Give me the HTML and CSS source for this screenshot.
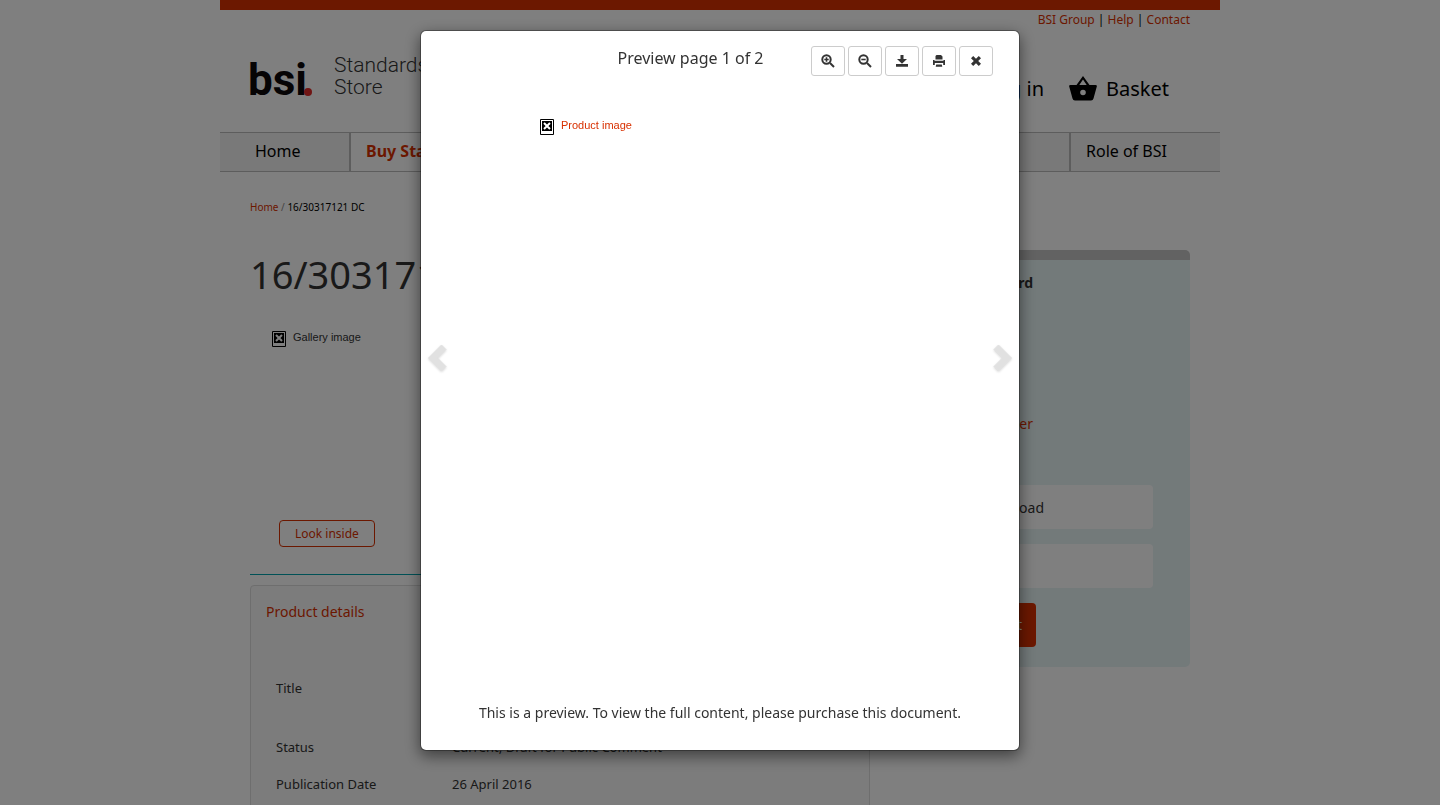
FILE: index.html
```html
<!DOCTYPE html>
<html lang="en">
<head>
<meta charset="utf-8">
<meta name="viewport" content="width=device-width, initial-scale=1">
<title>16/30317121 DC</title>
<link rel="stylesheet" href="styles.css">
</head>
<body>
<div class="page">
  <header class="header">
    <div class="top-links"><a href="#">BSI Group</a> | <a href="#">Help</a> | <a href="#">Contact</a></div>
    <div class="masthead">
      <a class="brand" href="#">
        <span class="brand-mark">bsi</span><span class="brand-dot"></span>
        <span class="brand-name">Standards<br>Store</span>
      </a>
      <div class="account">
        <a href="#">Log in</a>
        <a href="#" class="basket">
          <svg class="basket-icon" viewBox="0 0 28 25" aria-hidden="true"><path fill-rule="evenodd" d="M14 0 20.500 9H26.500Q28.200 9 27.800 10.500L24.500 22.500Q24 24.500 22 24.500H6Q4 24.500 3.500 22.500L.2 10.500Q-.2 9 1.500 9H7.500ZM14 3.600 10.300 9H17.700ZM14 13.700A2.800 2.800 0 1 0 14 19.300 2.800 2.800 0 0 0 14 13.700Z"/></svg>
          Basket
        </a>
      </div>
    </div>
    <nav class="nav">
      <a class="nav-item nav-home" href="#">Home</a>
      <a class="nav-item nav-current" href="#">Buy Standards</a>
      <span class="nav-item nav-fill"></span>
      <a class="nav-item nav-role" href="#">Role of BSI</a>
    </nav>
  </header>
  <div class="breadcrumb"><a href="#">Home</a> <span class="slash">/</span> 16/30317121 DC</div>
  <div class="columns">
    <main class="product">
      <h1 class="title">16/30317121 DC</h1>
      <div class="gallery">
        <div class="missing"><svg class="missing-icon" viewBox="0 0 14 16" aria-hidden="true"><path class="frame" d="M.5.5h13v15H.5z"/><path class="fill" d="M2 2h10v10H2z"/><path class="cross" d="M4 4l6 6m0-6l-6 6"/></svg>Gallery image</div>
        <button class="look" type="button">Look inside</button>
      </div>
      <section class="details">
        <h2 class="details-title">Product details</h2>
        <dl class="facts">
          <dt class="tall">Title</dt><dd class="tall"></dd>
          <dt>Status</dt><dd>Current, Draft for Public Comment</dd>
          <dt>Publication Date</dt><dd>26 April 2016</dd>
        </dl>
      </section>
    </main>
    <aside class="purchase">
      <h2 class="purchase-title">Buy this standard</h2>
      <a class="purchase-link" href="#">Become a member</a>
      <div class="options">
        <button class="option" type="button">Download</button>
        <button class="option" type="button" aria-label="Format"></button>
      </div>
      <button class="add" type="button">Add to basket</button>
    </aside>
  </div>
</div>
<div class="backdrop">
  <div class="modal" role="dialog" aria-modal="true" aria-labelledby="preview-title">
    <div class="modal-header">
      <h2 class="modal-title" id="preview-title">Preview page 1 of 2</h2>
      <div class="tools">
        <button class="tool" type="button" aria-label="Zoom in"><svg viewBox="0 0 14 14"><circle class="line" cx="5.500" cy="5.500" r="4.200"/><path class="line" d="M9 9l4 4"/><path d="M4.700 3.300h1.600v1.400h1.400v1.600H6.300v1.400H4.700V6.300H3.300V4.700h1.400z"/></svg></button>
        <button class="tool" type="button" aria-label="Zoom out"><svg viewBox="0 0 14 14"><circle class="line" cx="5.500" cy="5.500" r="4.200"/><path class="line" d="M9 9l4 4"/><path d="M3.300 4.700h4.400v1.600H3.300z"/></svg></button>
        <button class="tool" type="button" aria-label="Download"><svg viewBox="0 0 14 14"><path d="M5.500 1h3v4H12L7 9.800 2 5h3.500zM1 10h12v2.800H1z"/></svg></button>
        <button class="tool" type="button" aria-label="Print"><svg viewBox="0 0 14 14"><path d="M4.500 1h4.500l1.500 1.500V5.500h-7V2zM1 6h1.500v.8h9V6H13v5h-1.800V9H2.800v2H1zM4.200 10.600h5.600l.5 2.200H3.700z"/></svg></button>
        <button class="tool" type="button" aria-label="Close"><svg viewBox="0 0 14 14"><path d="M4.200 2 7 4.800 9.800 2 12 4.200 9.200 7 12 9.800 9.800 12 7 9.200 4.200 12 2 9.800 4.800 7 2 4.200z"/></svg></button>
      </div>
    </div>
    <div class="viewer">
      <button class="arrow" type="button" aria-label="Previous page"><svg viewBox="0 0 20 28"><path d="M14.500 1 19 5.500 10.500 14l8.500 8.500-4.500 4.500L1.500 14z"/></svg></button>
      <a class="missing sheet" href="#"><svg class="missing-icon" viewBox="0 0 14 16" aria-hidden="true"><path class="frame" d="M.5.5h13v15H.5z"/><path class="fill" d="M2 2h10v10H2z"/><path class="cross" d="M4 4l6 6m0-6l-6 6"/></svg>Product image</a>
      <button class="arrow" type="button" aria-label="Next page"><svg viewBox="0 0 20 28"><path d="M5.500 1 1 5.500 9.500 14 1 22.500l4.500 4.500L18.500 14z"/></svg></button>
    </div>
    <p class="notice">This is a preview. To view the full content, please purchase this document.</p>
  </div>
</div>
</body>
</html>
```
FILE: styles.css
```css
* { box-sizing: border-box; }
html { height: 100%; overflow: hidden; }
body { margin: 0; font: 14px/20px "Noto Sans", "Open Sans", sans-serif; color: #333; background: #fff; height: 100%; overflow: hidden; }
a { color: #d83000; text-decoration: none; }
button { font: inherit; color: inherit; margin: 0; padding: 0; border: 0; background: none; }
h1, h2, p, dl, dd { margin: 0; font-weight: 400; }

.page { max-width: 1000px; margin: 0 auto; }
.header { border-top: 10px solid #d83000; color: #000; }
.top-links { padding: 0 30px; text-align: right; font-size: 12px; }
.masthead { display: flex; justify-content: space-between; padding: 22px 51px 0 30px; height: 102px; }
.brand { display: flex; color: #000; height: 48px; }
.brand-mark { width: 54px; margin-left: -2px; font: 700 44px/56px Roboto, sans-serif; color: #0c080b; }
.brand-dot { width: 8px; height: 8px; margin: 36px 22px 0 2px; border-radius: 50%; background: #e02a28; }
.brand-name { font: 300 21px/22px Roboto, sans-serif; padding-top: 2px; color: #333; }
.account { display: flex; gap: 25px; padding-top: 24px; font-size: 20px; line-height: 26px; }
.account a { color: #000; }
.basket { display: flex; gap: 9px; }
.basket-icon { width: 28px; height: 25px; }

.nav { display: flex; height: 40px; border-top: 1px solid #bbb; border-bottom: 1px solid #bbb; background: #f2f2f2; font-size: 16px; line-height: 36px; }
.nav-item { flex: none; color: #000; padding-left: 15px; }
.nav-home { width: 129px; padding-left: 35px; }
.nav-current { width: 200px; color: #d83000; font-weight: 700; background: #fff; border-left: 2px solid #bbb; }
.nav-fill { flex: 1; }
.nav-role { width: 151px; border-left: 2px solid #bbb; }

.breadcrumb { padding: 25px 30px 0; font-size: 10px; color: #000; }
.slash { color: #888; }
.columns { display: flex; gap: 30px; padding: 33px 30px 0; align-items: flex-start; }
.product { flex: 1; }
.title { font-size: 38px; line-height: 48px; }
.gallery { display: flex; flex-direction: column; justify-content: space-between; align-items: flex-start; height: 277px; padding: 32px 22px 27px; border-bottom: 1px solid #00a3ad; }
.missing { display: flex; gap: 7px; font: 11px/14px "Liberation Sans", sans-serif; }
.missing-icon { width: 14px; height: 16px; margin-top: 1px; }
.frame { fill: #fff; stroke: #000; }
.gallery .frame { fill: none; }
.fill { fill: #000; }
.cross { stroke: #fff; stroke-width: 2; }
.look { margin-left: 7px; padding: 0 15px; height: 27px; border: 1px solid #d83000; border-radius: 4px; color: #d83000; font-size: 12px; }
.details { margin-top: 10px; padding-bottom: 40px; background: #f8f8f8; border: 1px solid #ddd; border-radius: 4px; }
.details-title { padding: 16px 15px 15px; font-size: 14px; line-height: 20px; color: #d83000; }
.facts { display: grid; grid-template-columns: 176px 1fr; padding: 41px 25px 0; font-size: 13px; line-height: 20px; }
.facts dt, .facts dd { height: 37px; }
.facts .tall { height: 59px; }

.purchase { width: 290px; padding: 13px 37px 20px; background: #e6f4f5; border-top: 10px solid #c4c4c4; border-radius: 5px; }
.purchase-title, .purchase-link { display: flex; justify-content: flex-end; padding-right: 120px; white-space: nowrap; }
.purchase-title { height: 141px; font-size: 14px; font-weight: 700; }
.options { display: flex; flex-direction: column; gap: 15px; padding-top: 51px; }
.option { height: 44px; padding: 2px 109px 0 0; text-align: right; background: #fff; border-radius: 4px; }
.add { display: flex; justify-content: flex-end; align-items: center; width: 99px; height: 44px; margin-top: 15px; padding-right: 14px; background: #d83000; border-radius: 4px; color: #fff; white-space: nowrap; }

.backdrop { position: fixed; inset: 0; background: rgba(0, 0, 0, .5); }
.modal { max-width: 600px; margin: 30px auto; background: #fff; border: 1px solid rgba(0, 0, 0, .3); background-clip: padding-box; border-radius: 6px; box-shadow: 0 5px 15px rgba(0, 0, 0, .5); }
.modal-header { display: flex; padding: 15px 26px 0 149px; height: 85px; }
.modal-title { flex: 1; text-align: center; font-size: 16px; line-height: 24px; }
.tools { display: flex; gap: 3px; }
.tool { display: grid; place-items: center; width: 34px; height: 30px; flex: none; border: 1px solid #ccc; border-radius: 3px; }
.tool svg { width: 14px; height: 14px; fill: #333; }
.tool .line { fill: none; stroke: #333; stroke-width: 2; }
.viewer { display: flex; align-items: center; height: 484px; padding: 0 6px; }
.arrow { width: 20px; height: 28px; }
.arrow svg { display: block; width: 20px; height: 28px; fill: #e1e1e1; stroke: #e1e1e1; stroke-linejoin: round; filter: drop-shadow(0 1px 1px rgba(0, 0, 0, .15)); }
.sheet { flex: 1; align-self: flex-start; padding: 2px 93px; }
.notice { padding: 103px 20px 27px; text-align: center; font-size: 14px; line-height: 20px; }
```
